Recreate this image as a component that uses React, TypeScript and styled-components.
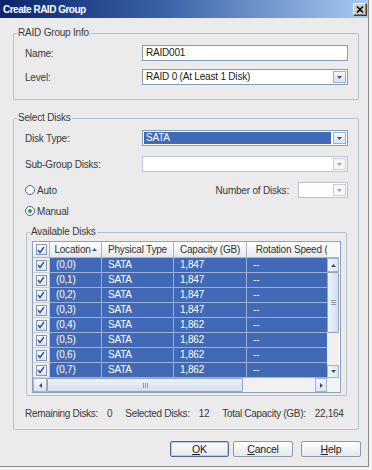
import React from "react";
import styled, { createGlobalStyle } from "styled-components";

const GlobalStyle = createGlobalStyle`
  html, body { margin: 0; padding: 0; background: #f3f3f3; }
  body {
    font-family: "Liberation Sans", Arial, sans-serif;
    font-size: 10px;
    letter-spacing: -0.2px;
    color: #2e2e2e;
  }
  * { box-sizing: border-box; }
`;

const Window = styled.div`
  width: 369px;
  height: 467px;
  background: #ebebeb;
  border-right: 1px solid #8c8c8c;
  border-bottom: 1px solid #8c8c8c;
  display: flex;
  flex-direction: column;
`;

const TitleBar = styled.div`
  flex: none;
  height: 18px;
  display: flex;
  align-items: center;
  justify-content: space-between;
  padding: 0 1px 0 3px;
  background: linear-gradient(to right, #0a246a 0%, #3a64a8 45%, #a6caf0 100%);
`;

const Title = styled.span`
  color: #fff;
  font-weight: bold;
  font-size: 10px;
  letter-spacing: -0.5px;
`;

const CloseButton = styled.div`
  width: 14px;
  height: 13px;
  display: flex;
  align-items: center;
  justify-content: center;
  background: #d4d0c8;
  border: 1px solid;
  border-color: #fff #404040 #404040 #fff;
  box-shadow: inset -1px -1px 0 #808080;
`;

const Body = styled.div`
  flex: 1;
  display: flex;
  flex-direction: column;
  padding: 9px 9px 0 13px;
`;

const Group = styled.fieldset<{ $gap?: number; $inset?: number }>`
  margin: ${({ $gap, $inset }) => `${$gap || 0}px ${$inset || 0}px 0`};
  padding: 0;
  min-width: 0;
  border: 1px solid #b8c0cb;
  border-radius: 2px;
`;

const Legend = styled.legend`
  margin-left: 3px;
  padding: 0 1px;
  font-size: 10px;
  line-height: 12px;
  color: #3a3a3a;
`;

const GroupBody = styled.div<{ $pad: string }>`
  display: flex;
  flex-direction: column;
  padding: ${({ $pad }) => $pad};
`;

const FieldRow = styled.div<{ $mt?: number }>`
  display: grid;
  grid-template-columns: 117px 1fr;
  align-items: center;
  height: 16px;
  margin-top: ${({ $mt }) => $mt || 0}px;
`;

const Label = styled.span`
  color: #3a3a3a;
  white-space: nowrap;
`;

const TextBox = styled.div`
  height: 16px;
  border: 1px solid #7f9db9;
  background: #fff;
  padding-left: 3px;
  line-height: 14px;
  color: #222;
`;

const Combo = styled.div<{ $disabled?: boolean; $w?: number }>`
  height: 16px;
  width: ${({ $w }) => ($w ? `${$w}px` : "auto")};
  display: flex;
  border: 1px solid ${({ $disabled }) => ($disabled ? "#b9c4d2" : "#7f9db9")};
  background: #fff;
`;

const ComboText = styled.div<{ $selected?: boolean }>`
  flex: 1;
  margin: ${({ $selected }) => ($selected ? "1px" : "0")};
  padding-left: ${({ $selected }) => ($selected ? "2px" : "3px")};
  line-height: ${({ $selected }) => ($selected ? "12px" : "14px")};
  background: ${({ $selected }) => ($selected ? "#4169b5" : "transparent")};
  color: ${({ $selected }) => ($selected ? "#fff" : "#222")};
  white-space: nowrap;
  overflow: hidden;
`;

const ComboArrow = styled.div<{ $disabled?: boolean }>`
  width: 13px;
  margin: 1px;
  display: flex;
  align-items: center;
  justify-content: center;
  border: 1px solid ${({ $disabled }) => ($disabled ? "#c5ced9" : "#9aaeca")};
  background: ${({ $disabled }) =>
    $disabled ? "#f7f7f7" : "linear-gradient(#f4f7fb, #d9e2ee)"};
`;

const RadioRow = styled.div<{ $mt: number }>`
  display: flex;
  align-items: center;
  height: 16px;
  margin-top: ${({ $mt }) => $mt}px;
`;

const RadioCircle = styled.span<{ $checked?: boolean }>`
  width: 10px;
  height: 10px;
  border-radius: 50%;
  border: 1px solid #4a6590;
  background: #fff;
  display: flex;
  align-items: center;
  justify-content: center;
  margin-right: 2px;
  &::after {
    content: "";
    width: 4px;
    height: 4px;
    border-radius: 50%;
    background: ${({ $checked }) => ($checked ? "#2fa52f" : "transparent")};
  }
`;

const Spacer = styled.div`
  flex: 1;
`;

const NumberLabel = styled(Label)`
  margin-right: 9px;
`;

/* ---------- table ---------- */

const TableFrame = styled.div`
  border: 1px solid #8fa2bd;
  background: #fff;
  display: flex;
  flex-direction: column;
`;

const TableLine = styled.div`
  display: flex;
`;

const Viewport = styled.div`
  width: 294px;
  overflow: hidden;
  display: flex;
  flex-direction: column;
`;

const HeaderRow = styled.div`
  display: flex;
  height: 16px;
`;

const HeaderCell = styled.div<{ $w: number }>`
  flex: none;
  width: ${({ $w }) => $w}px;
  height: 16px;
  display: flex;
  align-items: center;
  justify-content: center;
  gap: 1px;
  border-right: 1px solid #a8b5c7;
  border-bottom: 1px solid #a8b5c7;
  background: linear-gradient(#ffffff, #e4e8ee);
  color: #333;
  white-space: nowrap;
`;

const HeaderCorner = styled.div`
  width: 12px;
  height: 16px;
  background: #f7f8fa;
  border-bottom: 1px solid #a8b5c7;
`;

const Row = styled.div`
  display: flex;
  height: 15px;
`;

const CheckCell = styled.div`
  flex: none;
  width: 17px;
  height: 15px;
  display: flex;
  align-items: center;
  justify-content: center;
  background: #efefef;
  border-right: 1px solid #c3c7cd;
  border-bottom: 1px solid #c8ccd2;
`;

const Cell = styled.div<{ $w: number }>`
  flex: none;
  width: ${({ $w }) => $w}px;
  height: 15px;
  padding-left: 6px;
  line-height: 14px;
  background: #4169b5;
  color: #fff;
  border-right: 1px solid #9db0d8;
  border-bottom: 1px solid #9db0d8;
  white-space: nowrap;
  overflow: hidden;
`;

const CheckBox = styled.span`
  width: 11px;
  height: 11px;
  border: 1px solid #8496b2;
  background: linear-gradient(#ffffff, #dfe3ea);
  display: flex;
  align-items: center;
  justify-content: center;
`;

const VScroll = styled.div`
  width: 12px;
  height: 120px;
  display: flex;
  flex-direction: column;
  background: #f1f1f1;
`;

const HScroll = styled.div`
  width: 294px;
  height: 14px;
  display: flex;
  background: #f1f1f1;
`;

const ScrollCorner = styled.div`
  width: 12px;
  height: 14px;
  background: #f4f4f4;
`;

const ScrollButton = styled.div<{ $size: number; $vertical?: boolean }>`
  flex: none;
  ${({ $vertical, $size }) => ($vertical ? `height: ${$size}px;` : `width: ${$size}px;`)}
  display: flex;
  align-items: center;
  justify-content: center;
  border: 1px solid #a3b3c9;
  background: linear-gradient(${({ $vertical }) => ($vertical ? "to right" : "to bottom")}, #f8fafc, #dbe3ed);
`;

const Thumb = styled.div<{ $size: number; $vertical?: boolean }>`
  flex: none;
  ${({ $vertical, $size }) => ($vertical ? `height: ${$size}px;` : `width: ${$size}px;`)}
  display: flex;
  align-items: center;
  justify-content: center;
  border: 1px solid #91a5c2;
  border-radius: 1px;
  background: linear-gradient(${({ $vertical }) => ($vertical ? "to right" : "to bottom")}, #eef3fa, #d3deec);
`;

const Grip = styled.div<{ $vertical?: boolean }>`
  width: 5px;
  height: 5px;
  background: ${({ $vertical }) =>
    $vertical
      ? "repeating-linear-gradient(to bottom, #8b9bb3 0 1px, transparent 1px 2px)"
      : "repeating-linear-gradient(to right, #8b9bb3 0 1px, transparent 1px 2px)"};
`;

/* ---------- summary / buttons ---------- */

const Summary = styled.div`
  display: flex;
  gap: 13px;
  margin-top: 12px;
  line-height: 12px;
  letter-spacing: -0.3px;
  color: #3a3a3a;
`;

const Stat = styled.div`
  display: flex;
  gap: 9px;
  white-space: nowrap;
`;

const ButtonBar = styled.div`
  display: flex;
  justify-content: flex-end;
  margin: 11px -2px 0 0;
`;

const Button = styled.div<{ $default?: boolean; $ml?: number }>`
  width: ${({ $default }) => ($default ? "59px" : "60px")};
  height: 16px;
  margin-left: ${({ $ml }) => $ml || 0}px;
  display: flex;
  align-items: center;
  justify-content: center;
  border: 1px solid ${({ $default }) => ($default ? "#4a6a9a" : "#8a9ab0")};
  box-shadow: ${({ $default }) => ($default ? "inset 0 0 0 1px #b9cbe4" : "none")};
  border-radius: 2px;
  background: linear-gradient(#fdfdfd, #e6e8eb);
  color: #222;
  font-size: 10.5px;
`;

/* ---------- drawings ---------- */

type Dir = "up" | "down" | "left" | "right";

function Tri({ dir, color = "#3c5077" }: { dir: Dir; color?: string }) {
  const flat = dir === "up" || dir === "down";
  const w = flat ? 5 : 3;
  const h = flat ? 3 : 5;
  const pts = {
    up: "0,3 2.5,0 5,3",
    down: "0,0 5,0 2.5,3",
    left: "3,0 3,5 0,2.5",
    right: "0,0 3,2.5 0,5",
  }[dir];
  return (
    <svg width={w} height={h} viewBox={`0 0 ${w} ${h}`}>
      <polygon points={pts} fill={color} />
    </svg>
  );
}

function Check() {
  return (
    <CheckBox>
      <svg width="8" height="8" viewBox="0 0 8 8">
        <path d="M1 4 L3 6.5 L7 1" stroke="#2c4fa3" strokeWidth="1.4" fill="none" />
      </svg>
    </CheckBox>
  );
}

function ComboBox({ value, selected, disabled, width }: { value?: string; selected?: boolean; disabled?: boolean; width?: number }) {
  return (
    <Combo $disabled={disabled} $w={width}>
      <ComboText $selected={selected}>{value}</ComboText>
      <ComboArrow $disabled={disabled}>
        <Tri dir="down" color={disabled ? "#9aa6b6" : "#3c5077"} />
      </ComboArrow>
    </Combo>
  );
}

const columns = [
  { title: "Location", w: 52, sorted: true },
  { title: "Physical Type", w: 72 },
  { title: "Capacity (GB)", w: 73 },
  { title: "Rotation Speed (rpm)", w: 110 },
];

const disks = [0, 1, 2, 3, 4, 5, 6, 7].map((i) => ({
  loc: `(0,${i})`,
  type: "SATA",
  cap: i < 4 ? "1,847" : "1,862",
  speed: "--",
}));

export default function App() {
  return (
    <>
      <GlobalStyle />
      <Window>
        <TitleBar>
          <Title>Create RAID Group</Title>
          <CloseButton>
            <svg width="8" height="7" viewBox="0 0 8 7">
              <path d="M1 0.5 L7 6.5 M7 0.5 L1 6.5" stroke="#000" strokeWidth="1.6" />
            </svg>
          </CloseButton>
        </TitleBar>

        <Body>
          <Group>
            <Legend>RAID Group Info</Legend>
            <GroupBody $pad="6px 10px 14px 11px">
              <FieldRow>
                <Label>Name:</Label>
                <TextBox>RAID001</TextBox>
              </FieldRow>
              <FieldRow $mt={8}>
                <Label>Level:</Label>
                <ComboBox value="RAID 0 (At Least 1 Disk)" />
              </FieldRow>
            </GroupBody>
          </Group>

          <Group $gap={12}>
            <Legend>Select Disks</Legend>
            <GroupBody $pad="6px 10px 9px 11px">
              <FieldRow>
                <Label>Disk Type:</Label>
                <ComboBox value="SATA" selected />
              </FieldRow>
              <FieldRow $mt={10}>
                <Label>Sub-Group Disks:</Label>
                <ComboBox disabled />
              </FieldRow>
              <RadioRow $mt={10}>
                <RadioCircle />
                <Label>Auto</Label>
                <Spacer />
                <NumberLabel>Number of Disks:</NumberLabel>
                <ComboBox disabled width={50} />
              </RadioRow>
              <RadioRow $mt={5}>
                <RadioCircle $checked />
                <Label>Manual</Label>
              </RadioRow>

              <Group $gap={7} $inset={1}>
                <Legend>Available Disks</Legend>
                <GroupBody $pad="3px 5px 2px 5px">
                  <TableFrame>
                    <TableLine>
                      <Viewport>
                        <HeaderRow>
                          <HeaderCell $w={17}>
                            <Check />
                          </HeaderCell>
                          {columns.map((c) => (
                            <HeaderCell key={c.title} $w={c.w}>
                              {c.title}
                              {c.sorted && <Tri dir="up" color="#4a5a74" />}
                            </HeaderCell>
                          ))}
                        </HeaderRow>
                      </Viewport>
                      <HeaderCorner />
                    </TableLine>

                    <TableLine>
                      <Viewport>
                        {disks.map((d) => (
                          <Row key={d.loc}>
                            <CheckCell>
                              <Check />
                            </CheckCell>
                            <Cell $w={52}>{d.loc}</Cell>
                            <Cell $w={72}>{d.type}</Cell>
                            <Cell $w={73}>{d.cap}</Cell>
                            <Cell $w={110}>{d.speed}</Cell>
                          </Row>
                        ))}
                      </Viewport>
                      <VScroll>
                        <ScrollButton $vertical $size={14}>
                          <Tri dir="up" />
                        </ScrollButton>
                        <Thumb $vertical $size={61}>
                          <Grip $vertical />
                        </Thumb>
                        <Spacer />
                        <ScrollButton $vertical $size={13}>
                          <Tri dir="down" />
                        </ScrollButton>
                      </VScroll>
                    </TableLine>

                    <TableLine>
                      <HScroll>
                        <ScrollButton $size={14}>
                          <Tri dir="left" />
                        </ScrollButton>
                        <Thumb $size={196}>
                          <Grip />
                        </Thumb>
                        <Spacer />
                        <ScrollButton $size={12}>
                          <Tri dir="right" />
                        </ScrollButton>
                      </HScroll>
                      <ScrollCorner />
                    </TableLine>
                  </TableFrame>
                </GroupBody>
              </Group>

              <Summary>
                <Stat>
                  <span>Remaining Disks:</span>
                  <span>0</span>
                </Stat>
                <Stat>
                  <span>Selected Disks:</span>
                  <span>12</span>
                </Stat>
                <Stat>
                  <span>Total Capacity (GB):</span>
                  <span>22,164</span>
                </Stat>
              </Summary>
            </GroupBody>
          </Group>

          <ButtonBar>
            <Button $default>
              <span><u>O</u>K</span>
            </Button>
            <Button $ml={4}>
              <span><u>C</u>ancel</span>
            </Button>
            <Button $ml={8}>
              <span><u>H</u>elp</span>
            </Button>
          </ButtonBar>
        </Body>
      </Window>
    </>
  );
}
